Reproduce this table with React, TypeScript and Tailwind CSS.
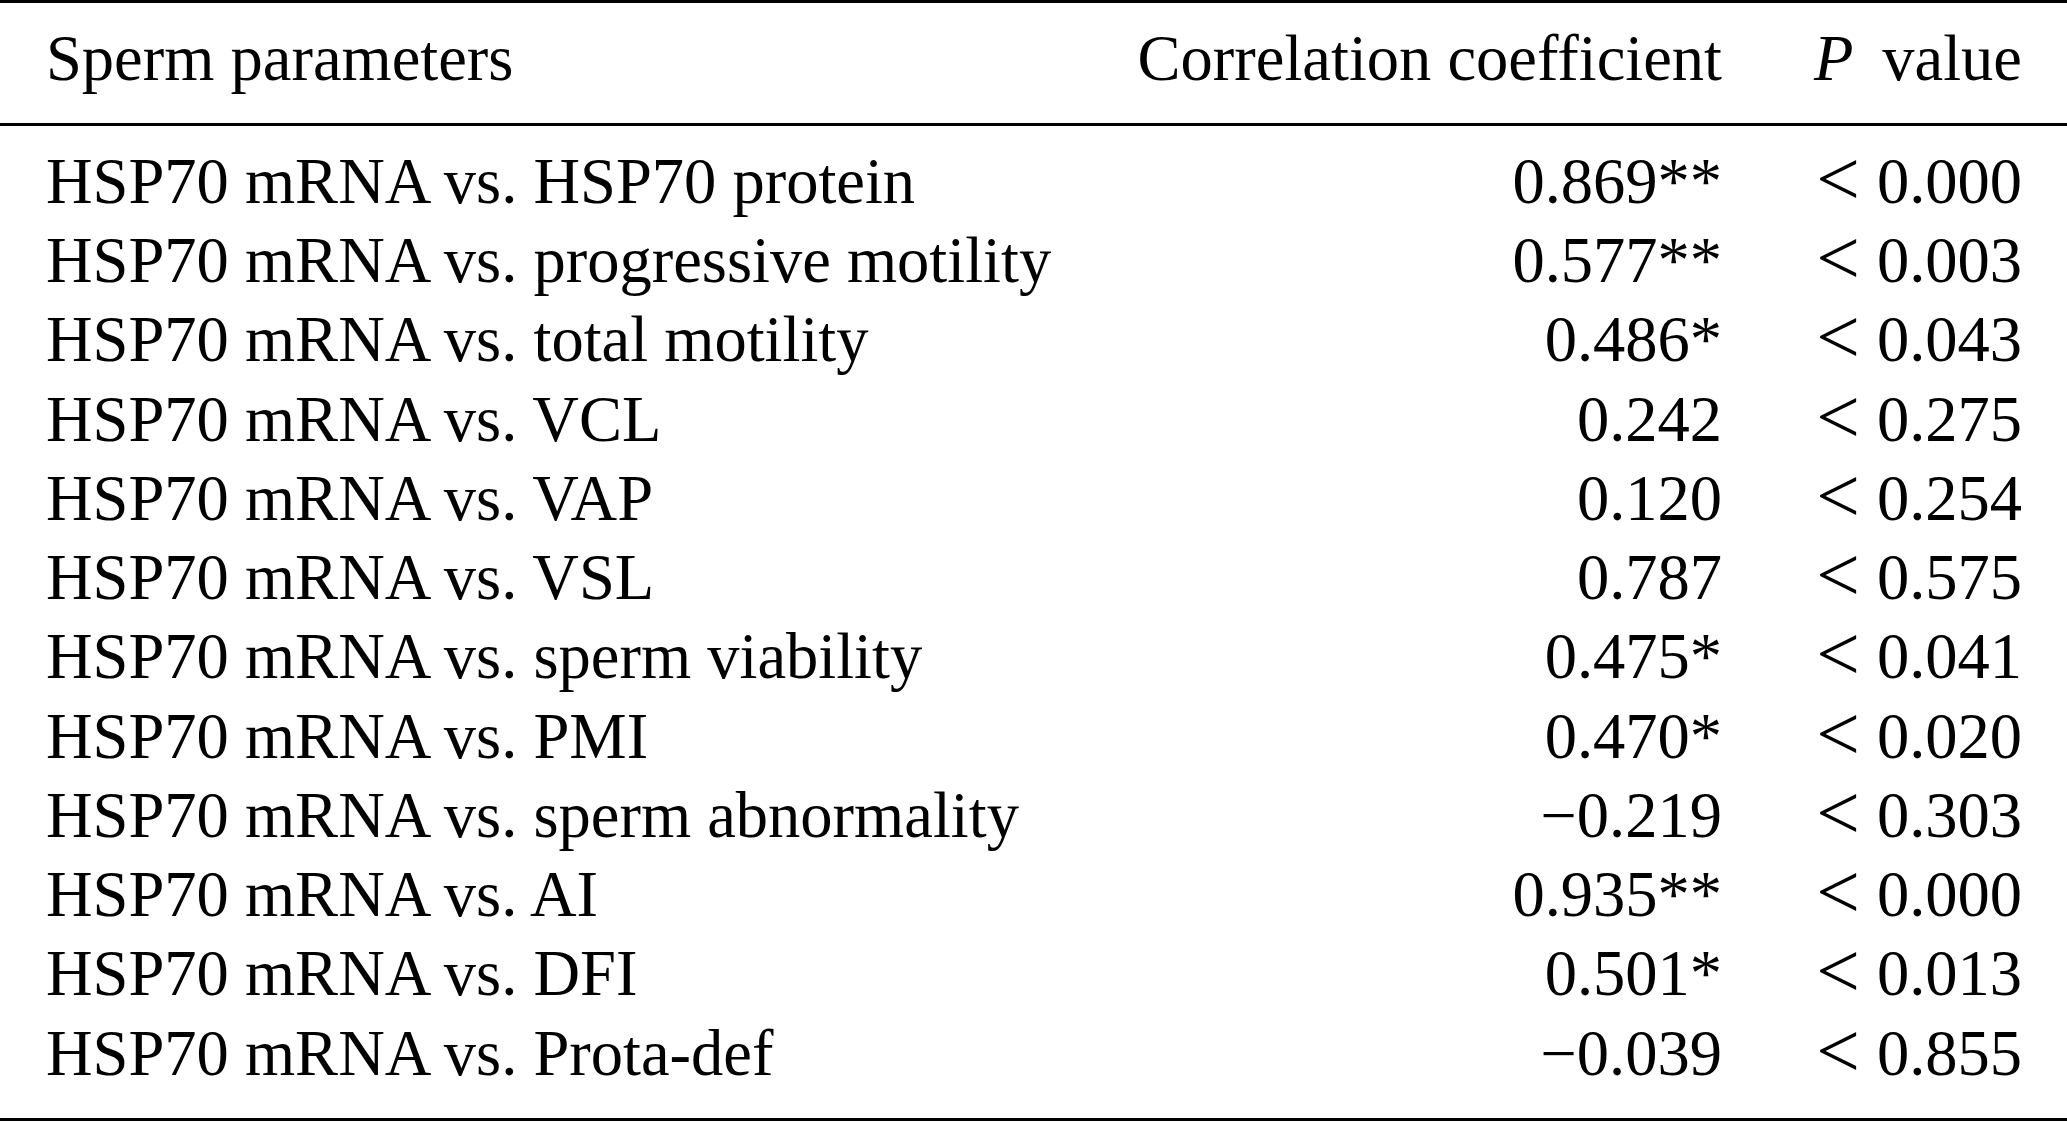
const rows: [string, string, string][] = [
  ['HSP70 mRNA vs. HSP70 protein', '0.869**', '0.000'],
  ['HSP70 mRNA vs. progressive motility', '0.577**', '0.003'],
  ['HSP70 mRNA vs. total motility', '0.486*', '0.043'],
  ['HSP70 mRNA vs. VCL', '0.242', '0.275'],
  ['HSP70 mRNA vs. VAP', '0.120', '0.254'],
  ['HSP70 mRNA vs. VSL', '0.787', '0.575'],
  ['HSP70 mRNA vs. sperm viability', '0.475*', '0.041'],
  ['HSP70 mRNA vs. PMI', '0.470*', '0.020'],
  ['HSP70 mRNA vs. sperm abnormality', '\u22120.219', '0.303'],
  ['HSP70 mRNA vs. AI', '0.935**', '0.000'],
  ['HSP70 mRNA vs. DFI', '0.501*', '0.013'],
  ['HSP70 mRNA vs. Prota-def', '\u22120.039', '0.855'],
]

export default function App() {
  return (
    <div className="w-[2067px] h-[1122px] bg-white text-black font-['Liberation_Serif','Times_New_Roman',serif] text-[64.5px] leading-[79.27px]">
      <div className="border-t-[3px] border-b-[3px] border-black">
        {/* header */}
        <div className="grid grid-cols-[1fr_auto_300px] pl-[46px] pr-[45px] pt-[16px] pb-[25px] border-b-[3px] border-black">
          <div>Sperm parameters</div>
          <div className="text-right">Correlation coefficient</div>
          <div className="text-right">
            <span className="italic mr-[0.45em]">P</span>value
          </div>
        </div>

        {/* body */}
        <div className="grid grid-cols-[1fr_auto_300px] pl-[46px] pr-[45px] pt-[15.5px] pb-[25px]">
          {rows.map(([name, r, p]) => (
            <div key={name} className="contents">
              <div className="whitespace-nowrap">{name}</div>
              <div className="text-right whitespace-nowrap">{r}</div>
              <div className="text-right whitespace-nowrap">
                <span className="inline-block scale-[1.2] origin-[50%_54%] -translate-y-[2px] ml-[4px] mr-[20px]">&lt;</span>
                {p}
              </div>
            </div>
          ))}
        </div>
      </div>
    </div>
  )
}
